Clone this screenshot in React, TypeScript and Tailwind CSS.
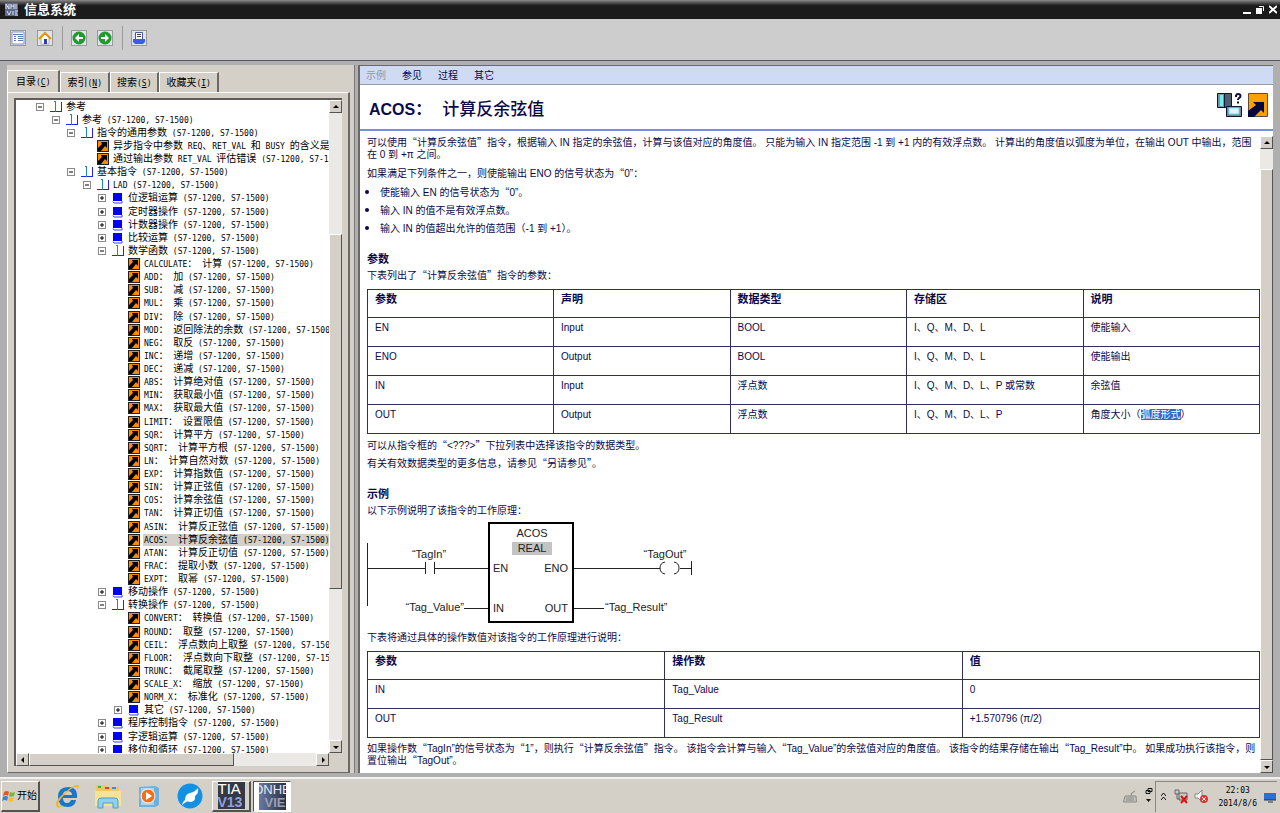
import { Fragment, ReactNode } from "react";

type IconKind = "open" | "closed" | "topic";
type TreeItem = { level: number; icon: IconKind; text: string; active?: boolean };

const S7 = " (S7-1200, S7-1500)";

const open = (level: number, text: string): TreeItem => ({ level, icon: "open", text });
const closed = (level: number, text: string): TreeItem => ({ level, icon: "closed", text: text + S7 });
const topic = (level: number, text: string, active = false): TreeItem => ({ level, icon: "topic", text, active });

const mathTopics = [
  "CALCULATE： 计算", "ADD： 加", "SUB： 减", "MUL： 乘", "DIV： 除", "MOD： 返回除法的余数",
  "NEG： 取反", "INC： 递增", "DEC： 递减", "ABS： 计算绝对值", "MIN： 获取最小值", "MAX： 获取最大值",
  "LIMIT： 设置限值", "SQR： 计算平方", "SQRT： 计算平方根", "LN： 计算自然对数", "EXP： 计算指数值",
  "SIN： 计算正弦值", "COS： 计算余弦值", "TAN： 计算正切值", "ASIN： 计算反正弦值", "ACOS： 计算反余弦值",
  "ATAN： 计算反正切值", "FRAC： 提取小数", "EXPT： 取幂",
];

const convertTopics = [
  "CONVERT： 转换值", "ROUND： 取整", "CEIL： 浮点数向上取整", "FLOOR： 浮点数向下取整",
  "TRUNC： 截尾取整", "SCALE_X： 缩放", "NORM_X： 标准化",
];

const tree: TreeItem[] = [
  open(0, "参考"),
  open(1, "参考" + S7),
  open(2, "指令的通用参数" + S7),
  topic(3, "异步指令中参数 REQ、RET_VAL 和 BUSY 的含义是什么"),
  topic(3, "通过输出参数 RET_VAL 评估错误" + S7),
  open(2, "基本指令" + S7),
  open(3, "LAD" + S7),
  closed(4, "位逻辑运算"),
  closed(4, "定时器操作"),
  closed(4, "计数器操作"),
  closed(4, "比较运算"),
  open(4, "数学函数" + S7),
  ...mathTopics.map((t) => topic(5, t + S7, t.startsWith("ACOS"))),
  closed(4, "移动操作"),
  open(4, "转换操作" + S7),
  ...convertTopics.map((t) => topic(5, t + S7)),
  closed(5, "其它"),
  closed(4, "程序控制指令"),
  closed(4, "字逻辑运算"),
  closed(4, "移位和循环"),
];

const indent = ["pl-[20px]", "pl-[36px]", "pl-[51px]", "pl-[67px]", "pl-[82px]", "pl-[98px]"];

const params = [
  ["EN", "Input", "BOOL", "I、Q、M、D、L", "使能输入"],
  ["ENO", "Output", "BOOL", "I、Q、M、D、L", "使能输出"],
  ["IN", "Input", "浮点数", "I、Q、M、D、L、P 或常数", "余弦值"],
  ["OUT", "Output", "浮点数", "I、Q、M、D、L、P", "角度大小（弧度形式）"],
];

const results = [
  ["IN", "Tag_Value", "0"],
  ["OUT", "Tag_Result", "+1.570796 (π/2)"],
];

// Chinese at the parent's size, Latin runs in a half-width monospace
function Mixed({ text }: { text: string }) {
  return (
    <>
      {text.split(/([\x20-\x7e]+)/).map((part, i) =>
        i % 2 ? (
          <span key={i} className="font-['DejaVu_Sans_Mono',monospace] text-[8px] leading-none whitespace-pre">{part}</span>
        ) : (
          <Fragment key={i}>{part}</Fragment>
        )
      )}
    </>
  );
}

// Quotation marks next to Chinese text take the full-width form
function Zh({ children }: { children: string }) {
  return (
    <>
      {children.split(/(“|(?<=[\u4e00-\u9fff>])”)/).map((part, i) =>
        i % 2 ? (
          <span key={i} className="font-['Noto_Sans_CJK_SC',sans-serif] leading-none">{part}</span>
        ) : (
          <Fragment key={i}>{part}</Fragment>
        )
      )}
    </>
  );
}

function TreeIcon({ kind }: { kind: IconKind }) {
  if (kind === "topic") {
    return (
      <svg width="12" height="12" viewBox="0 0 12 12" className="shrink-0">
        <rect width="12" height="12" fill="#222" />
        <rect x="1" y="1" width="10" height="10" fill="#ff8a00" />
        <path d="M4 2h6v6L8 6 4 11H1V8l4-4z" fill="#000" />
      </svg>
    );
  }
  if (kind === "closed") {
    return (
      <svg width="12" height="12" viewBox="0 0 12 12" className="shrink-0">
        <path d="M1 1h9v8H1z" fill="#0000f5" />
        <path d="M1 9.500l1 1.500h8V9" fill="none" stroke="#3c3cff" />
      </svg>
    );
  }
  return (
    <svg width="12" height="12" viewBox="0 0 12 12" className="shrink-0">
      <path d="M0 10h12v1H0zM11 1h1v10h-1z" fill="#2222ff" />
      <path d="M5 0h1v11H5zM4 0h1v1H4z" fill="#1f8f8f" />
    </svg>
  );
}

function Toggle({ expanded }: { expanded: boolean }) {
  return (
    <button aria-label={expanded ? "折叠" : "展开"} className="flex shrink-0">
      <svg width="8" height="8" viewBox="0 0 8 8">
        <rect x=".5" y=".5" width="7" height="7" fill="#fff" stroke="#8a8a8a" />
        <path d={expanded ? "M2 4h4" : "M2 4h4M4 2v4"} stroke="#000" />
      </svg>
    </button>
  );
}

const arrows = {
  up: "M1 5l3-3 3 3z",
  down: "M1 3l3 3 3-3z",
  left: "M5 1L2 4l3 3z",
  right: "M3 1l3 3-3 3z",
};

const raised = "border border-t-white border-l-white border-r-[#55534f] border-b-[#55534f] bg-[#d4d0c8]";

function ScrollButton({ dir }: { dir: keyof typeof arrows }) {
  return (
    <button aria-label={dir} className={`flex size-[13px] shrink-0 items-center justify-center ${raised}`}>
      <svg width="8" height="8" viewBox="0 0 8 8" className="shrink-0"><path d={arrows[dir]} fill="#000" /></svg>
    </button>
  );
}

function Tab({ label, hotkey, active }: { label: string; hotkey: string; active?: boolean }) {
  return (
    <button
      role="tab"
      aria-selected={!!active}
      className={`border-t border-r-2 border-l border-t-white border-r-[#6b6964] border-l-white text-[10px] whitespace-nowrap ${active ? "h-[22px] px-[8px]" : "h-[20px] px-[6px]"}`}
    >
      {label}
      <span className="font-['DejaVu_Sans_Mono',monospace] text-[8px]">(<u>{hotkey}</u>)</span>
    </button>
  );
}

function ToolButton({ label, children }: { label: string; children: ReactNode }) {
  return (
    <button aria-label={label} className="size-4 border border-[#9a9a9a] bg-[#dfe3ee]">
      <svg width="14" height="14" viewBox="0 0 14 14">{children}</svg>
    </button>
  );
}

function DataTable({ head, rows, firstCol }: { head: string[]; rows: string[][]; firstCol: string }) {
  return (
    <table className="w-full table-fixed border-collapse">
      <thead>
        <tr className="h-[28px]">
          {head.map((h, i) => (
            <th key={h} className={`border border-[#30305e] px-[7px] pt-[3px] text-left align-top text-[11px] font-bold ${i === 0 ? firstCol : ""}`}>{h}</th>
          ))}
        </tr>
      </thead>
      <tbody>
        {rows.map((row) => (
          <tr key={row[0]} className="h-[29px]">
            {row.map((cell, i) => (
              <td key={i} className="border border-[#30305e] px-[7px] pt-[4px] align-top">
                {cell.split(/(弧度形式)/).map((part, j) =>
                  j % 2 ? <mark key={j} className="bg-[#316ac5] text-white">{part}</mark> : part
                )}
              </td>
            ))}
          </tr>
        ))}
      </tbody>
    </table>
  );
}

function Ladder() {
  return (
    <svg width="330" height="102" viewBox="0 0 330 102" fill="none" stroke="#222" className="mt-[5px] block font-['Liberation_Sans',sans-serif] text-[11px]">
      <path d="M.5 21v63M0 46.500h58M58.500 40v12M67.500 40v12M67 46.500h54M97 86.500h24M207 46.500h86M207 86.500h30M313 46.500h11M324.500 39v14" />
      <path d="M298 40q-5 1-5 6t5 6M307 40q5 1 5 6t-5 6" />
      <rect x="122" y="1" width="84" height="99" strokeWidth="2" stroke="#000" />
      <rect x="145" y="20" width="40" height="13" fill="#c3c3c3" stroke="none" />
      <g fill="#222" stroke="none">
        <text x="165" y="15" textAnchor="middle">ACOS</text>
        <text x="165" y="30" textAnchor="middle">REAL</text>
        <text x="126" y="50">EN</text>
        <text x="201" y="50" textAnchor="end">ENO</text>
        <text x="126" y="90">IN</text>
        <text x="201" y="90" textAnchor="end">OUT</text>
        <text x="62" y="36" textAnchor="middle">“TagIn”</text>
        <text x="298" y="36" textAnchor="middle">“TagOut”</text>
        <text x="97" y="89" textAnchor="end">“Tag_Value”</text>
        <text x="238" y="89">“Tag_Result”</text>
      </g>
    </svg>
  );
}

function Sidebar() {
  return (
    <aside className="flex w-[348px] shrink-0 flex-col border-r border-r-[#77757a] bg-[#d4d0c8] pt-[5px] pr-[4px]">
      <div role="tablist" className="flex items-end">
        <Tab label="目录" hotkey="C" active />
        <Tab label="索引" hotkey="N" />
        <Tab label="搜索" hotkey="S" />
        <Tab label="收藏夹" hotkey="I" />
      </div>
      <div className="flex min-h-0 flex-1 flex-col border-t border-r-2 border-b border-l border-t-white border-r-[#6b6964] border-b-[#6b6964] border-l-white px-[6px] pt-[5px] pb-[6px]">
        <div className="flex min-h-0 flex-1 border-t-2 border-l-2 border-[#5f5d5a] bg-white">
          <div className="flex min-w-0 flex-1 flex-col">
            <div className="min-h-0 flex-1 overflow-hidden">
              <ul className="flex h-[656px] flex-col text-[10px] leading-[12px]">
                {tree.map((item) => (
                  <li key={item.text} className={`flex min-h-0 flex-1 items-center whitespace-nowrap ${indent[item.level]}`}>
                    <span className="flex w-[14px] shrink-0">
                      {item.icon !== "topic" && <Toggle expanded={item.icon === "open"} />}
                    </span>
                    <TreeIcon kind={item.icon} />
                    <a href="#topic" className={`ml-[3px] pl-px ${item.active ? "flex-1 bg-[#d4d0c8]" : ""}`}>
                      <Mixed text={item.text} />
                    </a>
                  </li>
                ))}
              </ul>
            </div>
            <div className="flex bg-[#ebe9e5]">
              <ScrollButton dir="left" />
              <div className={`w-[205px] ${raised}`} />
              <div className="flex-1" />
              <ScrollButton dir="right" />
            </div>
          </div>
          <div className="flex w-[13px] flex-col bg-[#ebe9e5]">
            <ScrollButton dir="up" />
            <div className="grow-[122]" />
            <div className={`grow-[354] ${raised}`} />
            <div className="grow-[152]" />
            <ScrollButton dir="down" />
            <div className="h-[13px] bg-[#d4d0c8]" />
          </div>
        </div>
      </div>
    </aside>
  );
}

function Article() {
  return (
    <article className="min-w-0 flex-1 overflow-hidden pt-[6px] pl-[7px] text-[10px] leading-[12px] text-[#0a0a4a]">
      <p>
        <Zh>可以使用“计算反余弦值”指令，根据输入 IN 指定的余弦值，计算与该值对应的角度值。 只能为输入 IN 指定范围 -1 到 +1 内的有效浮点数。 计算出的角度值以弧度为单位，在输出 OUT 中输出，范围在 0 到 +π 之间。</Zh>
      </p>
      <p className="mt-[7px]"><Zh>如果满足下列条件之一，则使能输出 ENO 的信号状态为“0”：</Zh></p>
      <ul className="mt-[6px] flex list-disc flex-col gap-[5px] pl-[13px] marker:text-[13px]">
        <li><Zh>使能输入 EN 的信号状态为“0”。</Zh></li>
        <li>输入 IN 的值不是有效浮点数。</li>
        <li>输入 IN 的值超出允许的值范围（-1 到 +1）。</li>
      </ul>
      <h2 className="mt-[18px] text-[11px] font-bold">参数</h2>
      <p className="mt-[5px] mb-[7px]"><Zh>下表列出了“计算反余弦值”指令的参数：</Zh></p>
      <DataTable head={["参数", "声明", "数据类型", "存储区", "说明"]} rows={params} firstCol="w-[186px]" />
      <p className="mt-[6px]"><Zh>{"可以从指令框的“<???>”下拉列表中选择该指令的数据类型。"}</Zh></p>
      <p className="mt-[6px]"><Zh>有关有效数据类型的更多信息，请参见“另请参见”。</Zh></p>
      <h2 className="mt-[18px] text-[11px] font-bold">示例</h2>
      <p className="mt-[5px]">以下示例说明了该指令的工作原理：</p>
      <Ladder />
      <p className="mt-[8px] mb-[7px]">下表将通过具体的操作数值对该指令的工作原理进行说明：</p>
      <DataTable head={["参数", "操作数", "值"]} rows={results} firstCol="" />
      <p className="mt-[5px]">
        <Zh>如果操作数“TagIn”的信号状态为“1”，则执行“计算反余弦值”指令。 该指令会计算与输入“Tag_Value”的余弦值对应的角度值。 该指令的结果存储在输出“Tag_Result”中。 如果成功执行该指令，则置位输出“TagOut”。</Zh>
      </p>
    </article>
  );
}

function Taskbar() {
  return (
    <footer className="flex h-[36px] shrink-0 items-center border-t-2 border-white/70 bg-[#d4d0c8] pr-[3px]">
      <button className={`ml-px flex h-[31px] w-[39px] items-center gap-px border-r-2 border-b-2 text-[10px] whitespace-nowrap ${raised}`}>
        <svg width="14" height="14" viewBox="0 0 14 14" className="shrink-0">
          <path d="M2 3q3-2 5 0L6 7Q4 5 1 7z" fill="#e4572e" />
          <path d="M8 3q2 1.500 5 0l-1 4q-3 1.500-5 0z" fill="#7cb342" />
          <path d="M1 8q3-2 5 0l-1 4q-2-2-5 0z" fill="#3f7fe0" />
          <path d="M7 8q2 1.500 5 0l-1 4q-3 1.500-5 0z" fill="#f6c02c" />
        </svg>
        开始
      </button>
      <div className="ml-[14px] flex items-center gap-[15px]">
        <button aria-label="Internet Explorer">
          <svg width="26" height="26" viewBox="0 0 26 26">
            <path d="M22 17h-5q-1 3-4 3-4 0-4-5h14q1-11-9-11Q4 4 4 14t10 10q7 0 8-7zM9 12q0-4 4-4 5 0 5 4z" fill="#1878c8" />
            <path d="M3 24q-4-4 6-13Q20 1 24 2q2 1-1 5 1-3-1-3-4 0-12 8-8 9-5 11 2 1 5-1-5 4-7 2z" fill="#f2b52a" />
          </svg>
        </button>
        <button aria-label="资源管理器">
          <svg width="26" height="26" viewBox="0 0 26 26">
            <path d="M1 3l1-1h8l2 2h12v18H1z" fill="#e9c866" />
            <path d="M3 4h3" stroke="#3fae49" strokeWidth="2" />
            <path d="M10 5h4" stroke="#d9432f" strokeWidth="2" />
            <path d="M17 5h4" stroke="#3a8fd0" strokeWidth="2" />
            <path d="M0 8h26v15H0z" fill="#f6e396" />
            <path d="M3 25v-7q0-3 3-3h14q3 0 3 3v7h-5v-5H8v5z" fill="#8fd0ee" stroke="#4d9fc9" />
          </svg>
        </button>
        <button aria-label="媒体播放器">
          <svg width="26" height="26" viewBox="0 0 26 26">
            <path d="M3 4l16-1 4 2v17l-4 2H3z" fill="#6fb1de" />
            <path d="M5 5h13v17H5z" fill="#a9d3ee" />
            <circle cx="12" cy="13" r="7" fill="#f0701c" stroke="#fff" />
            <path d="M10 9l6 4-6 4z" fill="#fff" />
          </svg>
        </button>
        <button aria-label="浏览器">
          <svg width="26" height="26" viewBox="0 0 26 26">
            <circle cx="13" cy="13" r="12.500" fill="#1290e4" />
            <path d="M21 5q1 5-3 8 1 5-4 6-4-1-5 0l-4 3q0-3 3-5 0-6 5-7 5-1 8-5z" fill="#fff" />
          </svg>
        </button>
      </div>
      <button className={`ml-[9px] flex h-[31px] w-[39px] items-center justify-center border-r-2 border-b-2 ${raised}`}>
        <span className="h-[27px] w-[27px] overflow-hidden bg-[#333946] text-left text-[15px] leading-[13px] text-white">
          TIA<br /><span className="text-[14px] font-bold text-[#8fa0dc]">V13</span>
        </span>
      </button>
      <button className="ml-[2px] flex h-[31px] w-[38px] items-center justify-center border border-t-[#55534f] border-r-white border-b-white border-l-[#55534f] bg-white">
        <span className="flex h-[27px] w-[27px] flex-col items-center overflow-hidden bg-linear-to-r from-[#6a7aa4] to-[#2a3145] text-[13px] leading-[13px] text-[#e4e8f2]">
          <span>ONHE</span>
          <span className="self-end font-bold text-[#98a0b4]">VIE</span>
        </span>
      </button>
      <div className="ml-auto flex items-center gap-[8px]">
        <svg width="14" height="13" viewBox="0 0 14 13" fill="none" stroke="#8d8a85">
          <path d="M2 6h11l.5 6H.5zM8 6q-1-3 4-5M3 8h8M3 10h8" fill="#c4c1bb" />
        </svg>
        <svg width="8" height="18" viewBox="0 0 8 18" fill="none" stroke="#111">
          <path d="M3 1.500h4v3H3zM1 3.500h4v3H1z" />
          <path d="M1 12l2.500 3L6 12z" fill="#111" stroke="none" />
        </svg>
      </div>
      <div className="ml-[2px] flex h-[31px] items-center border-t border-l border-[#8a8780] pl-[5px]">
        <svg width="5" height="9" viewBox="0 0 5 9" fill="none" stroke="#111"><path d="M0 4l2.500-3L5 4M0 8l2.500-3L5 8" /></svg>
        <svg width="14" height="15" viewBox="0 0 14 15" className="ml-[8px]">
          <path d="M1 1h4v4H1zM3 5v5h3M5 4h8v7H5z" fill="#c9c9c9" stroke="#666" />
          <path d="M7 7l6 7M13 7l-6 7" stroke="#d11" strokeWidth="2" />
        </svg>
        <svg width="14" height="15" viewBox="0 0 14 15" className="ml-[6px]">
          <path d="M1 5h3l4-4v12l-4-4H1z" fill="#f2f2f2" stroke="#888" />
          <circle cx="10" cy="10" r="4" fill="#e03030" />
          <path d="M8 8l4 4M12 8l-4 4" stroke="#fff" />
        </svg>
        <div className="ml-[10px] text-center font-['DejaVu_Sans_Mono',monospace] text-[8px] leading-[13px]">
          <div>22:03</div>
          <div>2014/8/6</div>
        </div>
        <svg width="14" height="12" viewBox="0 0 14 12" className="ml-[6px]">
          <path d="M1 2h12v7H1z" fill="#2d6fd0" />
          <path d="M1 9h12M5 11h5" stroke="#234" />
        </svg>
      </div>
    </footer>
  );
}

export default function App() {
  return (
    <div lang="zh-CN" className="flex h-screen flex-col overflow-hidden bg-[#afafaf] font-['Liberation_Sans','Noto_Sans_CJK_SC',sans-serif] text-black">
      <header className="flex h-[19px] shrink-0 items-center bg-linear-to-b from-[#8a8a8a] via-[#1b1b1b] via-30% to-[#1b1b1b] pr-[3px] pl-[5px]">
        <svg width="13" height="13" viewBox="0 0 13 13">
          <path d="M0 0h13v13H0z" fill="#5f6a8c" />
          <path d="M1 6V1l3 5V1M6 1v5M6 3h3M9 1v5M11 1v5M2 8l2 4 2-4M8 8v4M10 8h3M10 10h2M10 12h3" stroke="#dfe4f2" fill="none" />
        </svg>
        <h1 className="ml-[6px] text-[13px] leading-[19px] font-bold text-white">信息系统</h1>
        <div className="ml-auto flex gap-[5px]">
          <button aria-label="最小化"><svg width="8" height="9" viewBox="0 0 8 9"><path d="M0 8h8" stroke="#fff" strokeWidth="2" /></svg></button>
          <button aria-label="还原">
            <svg width="8" height="9" viewBox="0 0 8 9"><path d="M3 1.500h4.500V6" fill="none" stroke="#fff" /><path d="M0 3h6v6H0z" fill="#fff" /></svg>
          </button>
          <button aria-label="关闭"><svg width="8" height="9" viewBox="0 0 8 9"><path d="M0 1l8 7M8 1L0 8" stroke="#fff" strokeWidth="2" /></svg></button>
        </div>
      </header>

      <div className="flex h-[42px] shrink-0 items-center border-b border-[#555566] bg-[#cdcdcd] pb-[4px] pl-[10px]">
        <div className="flex gap-[11px]">
          <ToolButton label="目录">
            <path d="M1 1h12v12H1z" fill="#fff" stroke="#7f93c8" />
            <path d="M2 3.500h10M3 5.500h2M3 7.500h2M3 9.500h2M7 5.500h5M7 7.500h5M7 9.500h5" stroke="#5d78b8" />
          </ToolButton>
          <ToolButton label="主页">
            <path d="M3 7l4-4 4 4v6H3z" fill="#fff" stroke="#aaa" />
            <path d="M1 8l6-6 6 6" fill="none" stroke="#e8940c" strokeWidth="2" />
            <path d="M6 8h3v5H6z" fill="#2b3fb0" />
          </ToolButton>
        </div>
        <span className="mr-[8px] ml-[9px] h-6 w-px bg-[#9a9a9a]" />
        <div className="flex gap-[10px]">
          <ToolButton label="后退">
            <circle cx="7" cy="7" r="6.500" fill="#1f9a2c" />
            <path d="M3 7l4-4v3h4v2H7v3z" fill="#fff" />
          </ToolButton>
          <ToolButton label="前进">
            <circle cx="7" cy="7" r="6.500" fill="#1f9a2c" />
            <path d="M11 7L7 3v3H3v2h4v3z" fill="#fff" />
          </ToolButton>
        </div>
        <span className="mr-[8px] ml-[9px] h-6 w-px bg-[#9a9a9a]" />
        <ToolButton label="打印">
          <path d="M3.500 1.500h7v7h-7z" fill="#fff" stroke="#4a5a90" />
          <path d="M5 3.500h4M5 5.500h4" stroke="#445" />
          <path d="M1 8h12v3l-2 2H3l-2-2z" fill="#3b5cf0" />
        </ToolButton>
      </div>

      <main className="flex min-h-0 flex-1 gap-[3px] pt-[4px] pr-[7px] pb-[4px] pl-[7px]">
        <Sidebar />
        <section className="flex min-w-0 flex-1 flex-col border-t border-l-2 border-[#6b6964] bg-white">
          <nav className="flex h-[19px] shrink-0 items-center gap-[16px] border-b border-[#9a9aa6] bg-[#cfdbf5] pl-[6px] text-[10px] text-[#0a0a4a]">
            <a href="#example" className="text-[#9098a8]">示例</a>
            <a href="#see-also">参见</a>
            <a href="#procedure">过程</a>
            <a href="#other">其它</a>
          </nav>
          <div className="flex h-[46px] shrink-0 items-center border-b-2 border-[#7590d8] pr-[5px] pl-[9px]">
            <h2 className="flex items-baseline gap-[11px] pt-[6px] text-[17px] font-bold text-[#0a0a4a]">
              <span className="text-[16px]">ACOS：</span>
              <span className="font-medium">计算反余弦值</span>
            </h2>
            <svg width="52" height="26" viewBox="0 0 52 26" className="mb-[4px] ml-auto">
              <path d="M1.500 1.500h14v14h-14z" fill="#4f5d70" stroke="#10103c" />
              <path d="M2 2h6v13H2z" fill="#7c93a0" />
              <path d="M4 3h3v11H4z" fill="#6ff0ee" />
              <path d="M8.500 2v13" stroke="#10103c" />
              <path d="M10.500 14.500h15v10h-15z" fill="#75879a" stroke="#10103c" />
              <path d="M13 16h10v6H13z" fill="#dff4fa" stroke="#6fe3e8" />
              <path d="M20 5V3.500q.5-1.500 2-1.500 2.500 0 2.500 2 0 1.300-1.500 2-1 .6-1 2M22 9.500v2" fill="none" stroke="#10103c" strokeWidth="2" />
              <path d="M32.500 1.500h19v23h-19z" fill="#ff9e00" stroke="#5a4a40" />
              <path d="M37 10h11v11l-3-3-7 7h-6v-6l8-6z" fill="#05053f" />
            </svg>
          </div>
          <div className="flex min-h-0 flex-1">
            <Article />
            <div className="mt-[5px] flex w-[13px] shrink-0 flex-col bg-[#ebe9e5]">
              <ScrollButton dir="up" />
              <div className="h-[20px]" />
              <div className={`flex-1 ${raised}`} />
              <ScrollButton dir="down" />
            </div>
          </div>
        </section>
      </main>
      <Taskbar />
    </div>
  );
}
